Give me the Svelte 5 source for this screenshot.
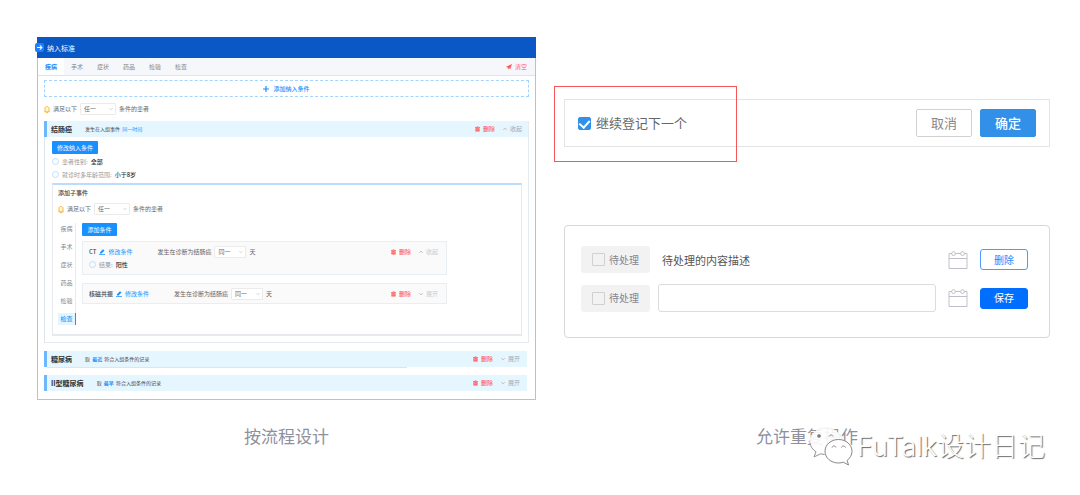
<script>
    const tabs = ['疾病', '手术', '症状', '药品', '检验', '检查'];
    let activeTab = $state('疾病');
    let activeSide = $state('检查');
    let keepGoing = $state(true);
    let draft = $state('');

    const conditions = [
        { name: 'CT', open: true, result: '阳性' },
        { name: '核磁共振', open: false }
    ];

    const groups = [
        { name: '糖尿病', pick: '最近', lined: true },
        { name: 'II型糖尿病', pick: '最早' }
    ];
</script>

{#snippet chevron(up)}
    <svg class="chevron" class:up viewBox="0 0 10 10"><path d="M1 3 L5 7 L9 3" /></svg>
{/snippet}

{#snippet actions(open)}
    <div class="actions">
        <button class="remove">
            <svg class="trash" viewBox="0 0 12 12">
                <path d="M4 0h4v1h4v2H0V1h4z M1 4h10v8H1z" />
                <path class="cut" d="M4.3 6v4 M7.7 6v4" />
            </svg>
            删除
        </button>
        <button class="toggle">{@render chevron(open)}{open ? '收起' : '展开'}</button>
    </div>
{/snippet}

{#snippet picker(value, label)}
    <span class="picker">
        <select aria-label={label}><option>{value}</option></select>
        {@render chevron(false)}
    </span>
{/snippet}

{#snippet matchRow()}
    <div class="match">
        <svg class="bell" viewBox="0 0 12 14">
            <path d="M2 11V4.5C2 2.5 4 1 6 1s4 1.5 4 3.5V11 M.5 11.5h11 M4 13.3h4" />
        </svg>
        <span>满足以下</span>
        {@render picker('任一', '满足以下')}
        <span>条件的患者</span>
    </div>
{/snippet}

{#snippet calendar()}
    <svg class="calendar" viewBox="0 0 20 18">
        <path d="M3.5 2.5H1v15h18v-15h-2.5 M7.5 2.5h5 M1 7.5h18" />
        <circle cx="5.5" cy="2.6" r="1.9" />
        <circle cx="14.5" cy="2.6" r="1.9" />
    </svg>
{/snippet}

<main>
    <figure>
        <section class="panel">
            <header>
                <span class="badge">
                    <svg viewBox="0 0 10 10"><path d="M1.500 5h7 M5.500 2L8.500 5L5.500 8" /></svg>
                </span>
                纳入标准
            </header>

            <nav>
                {#each tabs as tab}
                    <button class="tab" class:active={tab === activeTab} onclick={() => (activeTab = tab)}>{tab}</button>
                {/each}
                <button class="clear">
                    <svg viewBox="0 0 12 12"><path d="M12 0L8.5 10.5L6 8L4 11.5L3.5 7L0 5.5z" /></svg>
                    清空
                </button>
            </nav>

            <div class="body">
                <button class="add-wide">
                    <svg viewBox="0 0 10 10"><path d="M5 0v10 M0 5h10" /></svg>
                    添加纳入条件
                </button>

                {@render matchRow()}

                <article class="group">
                    <div class="bar">
                        <h3>结肠癌</h3>
                        <p>发生在入组事件 <em>同一时间</em></p>
                        {@render actions(true)}
                    </div>
                    <div class="group-body">
                        <button class="solid">修改纳入条件</button>
                        <ul class="facts">
                            <li>患者性别: <b>全部</b></li>
                            <li>就诊时多年龄范围: <b>小于8岁</b></li>
                        </ul>

                        <div class="sub">
                            <h4>添加子事件</h4>
                            {@render matchRow()}
                            <div class="split">
                                <div class="side">
                                    {#each tabs as tab}
                                        <button class:active={tab === activeSide} onclick={() => (activeSide = tab)}>{tab}</button>
                                    {/each}
                                </div>
                                <div class="conditions">
                                    <button class="solid small">添加条件</button>
                                    {#each conditions as c}
                                        <div class="condition">
                                            <div class="line">
                                                <strong>{c.name}</strong>
                                                <button class="edit">
                                                    <svg viewBox="0 0 12 12">
                                                        <path d="M8 0.5L11 3L5 9H2V6.5z M0 10.3h12V12H0z" />
                                                    </svg>
                                                    修改条件
                                                </button>
                                                <span>发生在诊断为结肠癌</span>
                                                {@render picker('同一', '发生时间')}
                                                <span>天</span>
                                                {@render actions(c.open)}
                                            </div>
                                            {#if c.open}
                                                <ul class="facts">
                                                    <li>结果: <b>{c.result}</b></li>
                                                </ul>
                                            {/if}
                                        </div>
                                    {/each}
                                </div>
                            </div>
                        </div>
                    </div>
                </article>

                {#each groups as g}
                    <div class="bar closed" class:lined={g.lined}>
                        <h3>{g.name}</h3>
                        <p>取 <em class="strong">{g.pick}</em> 符合入组条件的记录</p>
                        {@render actions(false)}
                    </div>
                {/each}
            </div>
        </section>
        <figcaption>按流程设计</figcaption>
    </figure>

    <figure>
        <div class="demos">
            <section class="confirm">
                <label><input type="checkbox" bind:checked={keepGoing} />继续登记下一个</label>
                <button class="cancel">取消</button>
                <button class="ok">确定</button>
                <div class="marker"></div>
            </section>

            <section class="todos">
                <div class="todo">
                    <label class="status"><input type="checkbox" />待处理</label>
                    <p>待处理的内容描述</p>
                    {@render calendar()}
                    <button>删除</button>
                </div>
                <div class="todo">
                    <label class="status"><input type="checkbox" />待处理</label>
                    <input type="text" aria-label="待处理的内容" bind:value={draft} />
                    {@render calendar()}
                    <button class="save">保存</button>
                </div>
            </section>
        </div>
        <figcaption>允许重复操作</figcaption>
    </figure>

    <div class="watermark">
        <svg viewBox="0 0 44 40">
            <path class="back" d="M17 1C8 1 1 7 1 14.500c0 4.500 2.500 8 6 10.300L5 30l6.500-3.200c2 .6 3.500.8 5.500.8 9 0 16-6 16-13.100S26 1 17 1z" />
            <path class="back-edge" d="M1 15.500c.3 4 2.600 7.200 6 9.300L5 30l6.500-3.200 4 .7" />
            <path class="front" d="M29.500 12.500c-7.500 0-13.500 5.200-13.500 11.800S22 36 29.500 36c1.800 0 3.300-.3 4.800-.8L39.500 38l-1.400-4.600c3-2.200 4.900-5.400 4.900-9.100 0-6.600-6-11.800-13.500-11.800z" />
            <circle cx="10" cy="9" r="1.800" />
            <path class="eye" d="M20 9.500c.5-2 3.500-2 4 0 M23 20.500c.5-2 3.500-2 4 0 M32.500 20.500c.5-2 3.500-2 4 0" />
        </svg>
        FuTalk设计日记
    </div>
</main>

<style>
    :global(body) {
        margin: 0;
        background: #fff;
    }

    main {
        position: relative;
        display: grid;
        grid-template-columns: 499fr 486fr;
        gap: 28px;
        padding: 37px 30px 37px 37px;
        font-family: "Noto Sans CJK SC", sans-serif;
        font-size: 6px;
        line-height: 8px;
        color: #666;
    }

    main * {
        box-sizing: border-box;
    }

    figure, h3, h4, p, ul {
        margin: 0;
        padding: 0;
    }

    figure {
        display: flex;
        flex-direction: column;
        min-width: 0;
    }

    figcaption {
        margin-top: 24px;
        font-size: 17px;
        line-height: 24px;
        text-align: center;
        color: #8f909c;
    }

    button, select, input {
        margin: 0;
        padding: 0;
        border: 0;
        background: none;
        font: inherit;
        color: inherit;
    }

    svg {
        display: block;
        flex: none;
        overflow: visible;
    }

    /* left panel */
    .panel {
        border: 1px solid #a9c4ec;
        border-top: 0;
    }

    header {
        position: relative;
        display: flex;
        align-items: center;
        height: 21px;
        margin: 0 -1px;
        padding-left: 10px;
        background: #0a57c6;
        font-size: 7px;
        color: #fff;
    }

    .badge {
        position: absolute;
        left: -2px;
        top: 6px;
        padding: 1px;
        border-radius: 2px;
        background: #1e80ff;
    }

    .badge svg {
        width: 7px;
        height: 7px;
        fill: none;
        stroke: #fff;
        stroke-width: 1.5;
    }

    nav {
        display: flex;
        height: 18px;
        border-bottom: 1px solid #dce4ef;
        background: #f5f7fb;
    }

    .tab {
        width: 26px;
        color: #888;
    }

    .tab.active {
        background: #fff;
        font-weight: 700;
        color: #1890ff;
    }

    .clear {
        display: flex;
        align-items: center;
        gap: 3px;
        margin-left: auto;
        padding-right: 8px;
        color: #ff6467;
    }

    .clear svg {
        width: 6px;
        height: 6px;
        fill: #ff5a5f;
    }

    .body {
        padding: 4px 6px 8px;
    }

    .add-wide {
        display: flex;
        align-items: center;
        justify-content: center;
        gap: 4px;
        width: 100%;
        height: 17px;
        border: 1px dashed #a3d3ff;
        font-weight: 500;
        color: #1890ff;
    }

    .add-wide svg {
        width: 6px;
        height: 6px;
        stroke: #1890ff;
        stroke-width: 2;
    }

    .match {
        display: flex;
        align-items: center;
        gap: 3px;
        height: 24px;
    }

    .bell {
        width: 6px;
        height: 7px;
        fill: #fff6dc;
        stroke: #f9b934;
        stroke-width: 2;
    }

    .picker {
        position: relative;
        display: flex;
        width: 36px;
        height: 12px;
    }

    .picker select {
        appearance: none;
        width: 100%;
        padding-left: 3px;
        border: 1px solid #ebebeb;
        border-radius: 1px;
        background: #fff;
    }

    .picker .chevron {
        position: absolute;
        right: 3px;
        top: 4px;
        stroke: #ccc;
    }

    .chevron {
        width: 4px;
        height: 4px;
        fill: none;
        stroke: #aaa;
        stroke-width: 2;
    }

    .chevron.up {
        transform: rotate(180deg);
    }

    .group {
        border: 1px solid #e6ebf1;
        border-top: 0;
        border-left: 1px solid #dfe4ec;
    }

    .bar {
        position: relative;
        display: flex;
        align-items: center;
        height: 16px;
        padding: 0 7px 0 4px;
        border-left: 3px solid #6db7ff;
        background: #e6f6ff;
    }

    .group > .bar {
        margin-left: -1px;
        padding-right: 6px;
    }

    .bar h3 {
        margin-right: 13px;
        font-size: 7px;
        font-weight: 700;
        color: #333;
    }

    .bar p {
        font-size: 5px;
        color: #444;
    }

    em {
        margin: 0 1px;
        font-style: normal;
        color: #1890ff;
    }

    em.strong {
        font-weight: 700;
    }

    .closed {
        margin: 8px 2px 0 0;
    }

    .lined::after {
        content: "";
        position: absolute;
        left: 0;
        bottom: -1px;
        width: 75%;
        height: 1px;
        background: #dfe5ea;
    }

    .actions {
        display: flex;
        gap: 8px;
        margin-left: auto;
    }

    .actions button {
        display: flex;
        align-items: center;
        gap: 3px;
    }

    .remove {
        font-weight: 500;
        color: #ff5f63;
    }

    .toggle {
        color: #a5abb2;
    }

    .trash {
        width: 5px;
        height: 6px;
        fill: #ff5257;
    }

    .cut {
        stroke: #fff;
    }

    .group-body {
        padding: 4px 6px 6px 7px;
    }

    .solid {
        display: block;
        width: 46px;
        height: 13px;
        border-radius: 1px;
        background: #1890ff;
        color: #fff;
    }

    .solid.small {
        width: 35px;
    }

    .facts {
        list-style: none;
        color: #999;
    }

    .facts li {
        display: flex;
        align-items: center;
        gap: 3px;
        height: 13px;
    }

    .facts li::before {
        content: "";
        width: 5px;
        height: 5px;
        border: 1px solid #bcdfff;
        border-radius: 50%;
    }

    .facts b {
        font-weight: 500;
        color: #333;
    }

    .group-body > .facts {
        padding-top: 1px;
    }

    .sub {
        margin-top: 2px;
        padding: 4px 5px 9px;
        border: 1px solid #e6e9ed;
        border-top: 2px solid #badcff;
        border-bottom: 2px solid #e6e9ed;
    }

    h4 {
        font-size: 6px;
        font-weight: 500;
        color: #444;
    }

    .split {
        display: flex;
        gap: 6px;
        padding-top: 2px;
    }

    .side {
        display: flex;
        flex-direction: column;
        gap: 6px;
        width: 18px;
        border-right: 1px solid #e6e9ed;
    }

    .side button {
        height: 12px;
        margin-right: -1px;
        border-right: 1px solid transparent;
        color: #888;
    }

    .side .active {
        border-color: #1890ff;
        background: #e6f4ff;
        font-weight: 500;
        color: #1890ff;
    }

    .conditions {
        flex: 1;
        display: flex;
        flex-direction: column;
        margin-right: 69px;
    }

    .condition {
        margin-top: 8px;
        padding: 4px 8px 3px 6px;
        border: 1px solid #e9eef3;
        background: #fafafa;
    }

    .conditions .solid + .condition {
        margin-top: 5px;
    }

    .line {
        display: flex;
        align-items: center;
        gap: 3px;
    }

    .line strong {
        font-weight: 500;
        color: #444;
    }

    .line .picker {
        width: 32px;
    }

    .line .toggle {
        color: #c9cdd2;
    }

    .edit {
        display: flex;
        align-items: center;
        gap: 3px;
        margin-right: 22px;
        color: #1890ff;
    }

    .edit svg {
        width: 6px;
        height: 6px;
        fill: #1890ff;
    }

    /* right column */
    .demos {
        flex: 1;
        padding-top: 62px;
    }

    .confirm {
        position: relative;
        display: flex;
        align-items: center;
        gap: 8px;
        height: 48px;
        padding: 0 13px;
        border: 1px solid #e4e4e4;
        font-size: 13px;
        line-height: 20px;
    }

    .marker {
        position: absolute;
        left: -11px;
        top: -14px;
        width: 183px;
        height: 76px;
        border: 1px solid #f5565a;
        pointer-events: none;
    }

    label {
        display: flex;
        align-items: center;
        gap: 5px;
    }

    .confirm label {
        margin-right: auto;
    }

    input[type="checkbox"] {
        appearance: none;
        display: grid;
        place-items: center;
        width: 13px;
        height: 13px;
        border: 1px solid #d0d0d0;
        border-radius: 1px;
    }

    input[type="checkbox"]:checked {
        border-color: #3390e8;
        border-radius: 2px;
        background: #3390e8;
    }

    input[type="checkbox"]:checked::after {
        content: "";
        width: 5px;
        height: 8px;
        margin-bottom: 3px;
        border: solid #fff;
        border-width: 0 2px 2px 0;
        transform: rotate(42deg);
    }

    .confirm button {
        width: 56px;
        height: 28px;
        border: 1px solid #d2d2d2;
        border-radius: 2px;
        color: #888;
    }

    .confirm .ok {
        border-color: #3390e8;
        background: #3390e8;
        font-weight: 500;
        color: #fff;
    }

    .todos {
        display: flex;
        flex-direction: column;
        gap: 11px;
        margin-top: 78px;
        padding: 20px 21px 25px 16px;
        border: 1px solid #d8d8d8;
        border-radius: 4px;
        font-size: 10px;
        line-height: 16px;
    }

    .todo {
        display: flex;
        align-items: center;
    }

    .status {
        gap: 4px;
        height: 27px;
        padding: 0 11px;
        border-radius: 3px;
        background: #f2f2f2;
        color: #858590;
    }

    .todo p {
        flex: 1;
        padding-left: 12px;
        font-size: 11px;
        color: #555;
    }

    .todo input[type="text"] {
        flex: 1;
        min-width: 0;
        height: 28px;
        margin-left: 8px;
        padding: 0 8px;
        border: 1px solid #dcdcdc;
        border-radius: 3px;
    }

    .calendar {
        width: 20px;
        height: 18px;
        margin: 0 12px;
        fill: none;
        stroke: #bfbfcb;
    }

    .todo button {
        width: 48px;
        height: 21px;
        border: 1px solid #4d9bff;
        border-radius: 3px;
        color: #2a86ff;
    }

    .todo .save {
        border-color: #006fff;
        background: #006fff;
        color: #fff;
    }

    .watermark {
        position: absolute;
        right: 35px;
        top: 427px;
        display: flex;
        align-items: center;
        gap: 4px;
        font-family: Inter, "Noto Sans CJK SC", sans-serif;
        font-size: 27px;
        font-weight: 300;
        line-height: 40px;
        color: #fff;
        text-shadow: 1px 1px 1px #666;
    }

    .watermark svg {
        width: 44px;
        height: 40px;
        fill: #777;
    }

    .watermark .back {
        fill: #fff;
        fill-opacity: 0.9;
        stroke: #eee;
    }

    .watermark .back-edge {
        fill: none;
        stroke: #999;
    }

    .watermark .front {
        fill: #fff;
        stroke: #888;
    }

    .watermark .eye {
        fill: none;
        stroke: #888;
    }
</style>
